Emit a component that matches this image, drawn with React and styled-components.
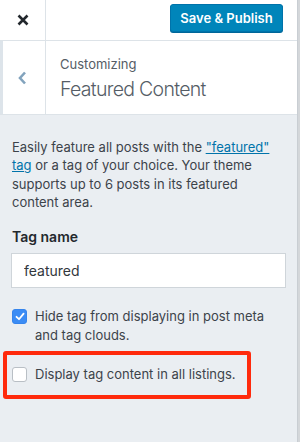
import styled, { createGlobalStyle } from "styled-components";

const GlobalStyle = createGlobalStyle`
    body {
        margin: 0;
        background: #d4d7da;
        font-family: Inter, "Liberation Sans", Arial, sans-serif;
        -webkit-font-smoothing: antialiased;
    }
`;

const Panel = styled.div`
    width: 297px;
    height: 442px;
    background: #eaeef2;
    border-right: 1px solid #c9ced3;
    display: flex;
    flex-direction: column;
    overflow: hidden;
`;

const Header = styled.div`
    height: 40px;
    display: flex;
    align-items: center;
    background: #fff;
    border-bottom: 1px solid #dde3e8;
    flex-shrink: 0;
`;

const CloseBtn = styled.div`
    width: 46px;
    height: 40px;
    display: flex;
    align-items: center;
    justify-content: center;
    border-right: 1px solid #dde3e8;
    box-sizing: border-box;
`;

const SaveBtn = styled.button`
    margin-left: auto;
    margin-right: 14px;
    height: 28px;
    width: 113px;
    padding: 0;
    background: #0085ba;
    border: 1px solid #0073aa;
    border-radius: 3px;
    box-shadow: 0 1px 0 #006799;
    color: #fff;
    font-family: Inter, "Liberation Sans", Arial, sans-serif;
    font-weight: 600;
    font-size: 13px;
    margin-top: -4px;
`;

const SectionTitle = styled.div`
    height: 73px;
    display: flex;
    background: #fff;
    border-bottom: 1px solid #dde3e8;
    flex-shrink: 0;
`;

const BackBtn = styled.div`
    width: 46px;
    box-sizing: border-box;
    border-left: 3px solid #dde4ea;
    border-right: 1px solid #dde3e8;
    display: flex;
    align-items: center;
    justify-content: center;
    padding-right: 4px;
`;

const Titles = styled.div`
    padding: 14px 0 0 14px;
    color: #555d66;
`;

const Crumb = styled.div`
    font-size: 13px;
    line-height: 18px;
`;

const Heading = styled.div`
    font-size: 19.5px;
    font-weight: 300;
    line-height: 26px;
    margin-top: 3px;
    letter-spacing: -0.7px;
`;

const Content = styled.div`
    padding: 23px 12px 0 12px;
`;

const Description = styled.p`
    margin: 0;
    font-size: 13px;
    line-height: 18.4px;
    color: #3c434a;
    width: 272px;

    a {
        color: #0073aa;
        text-decoration: underline;
    }
`;

const Label = styled.div`
    margin-top: 16px;
    font-size: 14px;
    font-weight: 600;
    line-height: 18px;
    color: #23282d;
`;

const Input = styled.input`
    display: block;
    margin-top: 7px;
    width: 275px;
    height: 35px;
    box-sizing: border-box;
    margin-left: -1px;
    border: 1px solid #cfd5da;
    background: #fff;
    padding: 0 12px;
    font-family: Inter, "Liberation Sans", Arial, sans-serif;
    font-size: 14px;
    color: #32373c;
    outline: none;
`;

const CheckRow = styled.label`
    display: flex;
    align-items: flex-start;
    gap: 8px;
    margin-top: ${(p) => p.$top}px;
    font-size: 13px;
    line-height: 19px;
    color: #3c434a;
`;

const Box = styled.span`
    flex-shrink: 0;
    width: 15px;
    height: 15px;
    margin-top: 2px;
    box-sizing: border-box;
    border-radius: 3px;
    display: flex;
    align-items: center;
    justify-content: center;
    background: ${(p) => (p.$checked ? "#3b8cf5" : "#fff")};
    border: 1px solid ${(p) => (p.$checked ? "#3584ec" : "#b9bfc5")};
`;

const Highlight = styled.div`
    margin: 6px 0 0 -9px;
    width: 248px;
    height: 48px;
    box-sizing: border-box;
    border: 4px solid #ff2a0c;
    border-radius: 3px;
    padding-left: 5px;
    display: flex;
    align-items: center;
`;

const Checkbox = ({ checked }) => (
    <Box $checked={checked}>
        {checked && (
            <svg width="10" height="9" viewBox="0 0 10 9">
                <path d="M1.5 4.8 L4 7.2 L8.6 1.6" fill="none" stroke="#fff" strokeWidth="1.8" strokeLinecap="round" strokeLinejoin="round" />
            </svg>
        )}
    </Box>
);

const App = () => {
    return (
        <>
            <GlobalStyle />
            <Panel>
                <Header>
                    <CloseBtn>
                        <svg width="12" height="12" viewBox="0 0 12 12">
                            <path d="M1.5 1.5 L10.5 10.5 M10.5 1.5 L1.5 10.5" stroke="#23282d" strokeWidth="2.6" />
                        </svg>
                    </CloseBtn>
                    <SaveBtn>Save &amp; Publish</SaveBtn>
                </Header>
                <SectionTitle>
                    <BackBtn>
                        <svg width="9" height="14" viewBox="0 0 9 14">
                            <path d="M7 1.5 L2 7 L7 12.5" fill="none" stroke="#82a3bd" strokeWidth="2.6" />
                        </svg>
                    </BackBtn>
                    <Titles>
                        <Crumb>Customizing</Crumb>
                        <Heading>Featured Content</Heading>
                    </Titles>
                </SectionTitle>
                <Content>
                    <Description>
                        Easily feature all posts with the <a href="#">"featured" tag</a> or a tag of your choice. Your theme supports up to 6 posts in its featured content area.
                    </Description>
                    <Label>Tag name</Label>
                    <Input defaultValue="featured" readOnly />
                    <CheckRow $top={19}>
                        <Checkbox checked />
                        <span>Hide tag from displaying in post meta and tag clouds.</span>
                    </CheckRow>
                    <Highlight>
                        <CheckRow $top={0}>
                            <Checkbox />
                            <span>Display tag content in all listings.</span>
                        </CheckRow>
                    </Highlight>
                </Content>
            </Panel>
        </>
    );
};

export default App;
